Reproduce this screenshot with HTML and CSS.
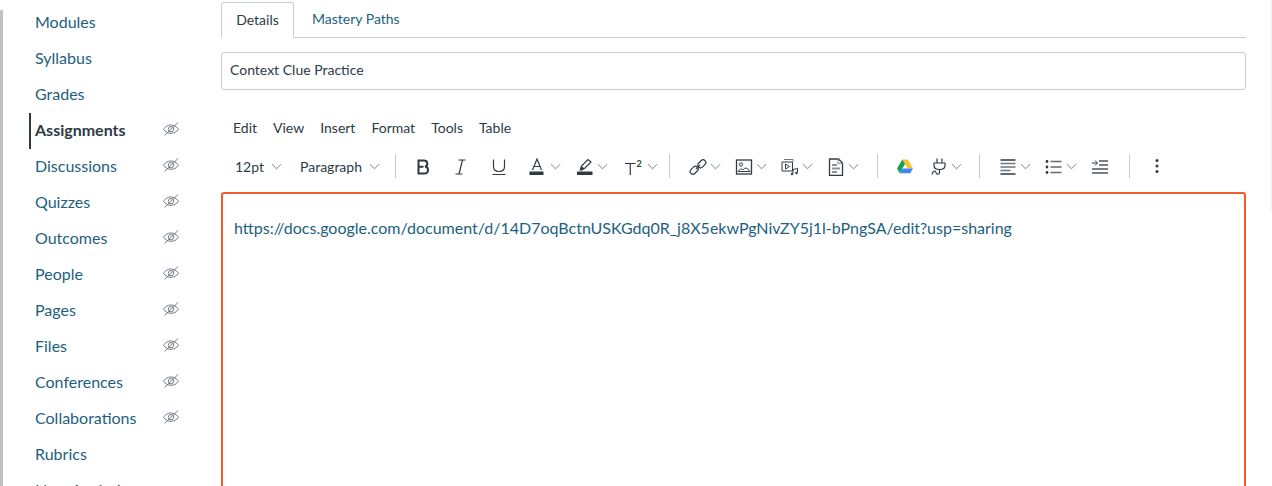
FILE: index.html
```html
<!DOCTYPE html>
<html lang="en">
<head>
<meta charset="utf-8">
<title>Context Clue Practice</title>
<link rel="stylesheet" href="styles.css">
</head>
<body>
<svg class="defs" width="0" height="0" aria-hidden="true">
  <defs>
    <symbol id="eye" viewBox="0 0 16 14">
      <path d="M.5 7.200C2.600 4.300 5 3 8 3s5.400 1.300 7.500 4.200C13.400 10 11 11.300 8 11.300S2.600 10 .5 7.200Z" fill="none" stroke="#66717a" stroke-width=".9"/>
      <circle cx="8" cy="7.200" r="2.700" fill="none" stroke="#66717a" stroke-width=".9"/>
      <path d="M1.500 13.500 15 .5" fill="none" stroke="#66717a" stroke-width=".9"/>
    </symbol>
    <symbol id="chev" viewBox="0 0 12 7">
      <path d="M1 1l5 5 5-5" fill="none" stroke="#68777d" stroke-width="1"/>
    </symbol>
  </defs>
</svg>
<div class="page">
  <div class="scrollbar"></div>
  <nav class="nav">
    <a class="nav-item">Modules</a>
    <a class="nav-item">Syllabus</a>
    <a class="nav-item">Grades</a>
    <a class="nav-item active">Assignments<svg class="eye"><use href="#eye"/></svg></a>
    <a class="nav-item">Discussions<svg class="eye"><use href="#eye"/></svg></a>
    <a class="nav-item">Quizzes<svg class="eye"><use href="#eye"/></svg></a>
    <a class="nav-item">Outcomes<svg class="eye"><use href="#eye"/></svg></a>
    <a class="nav-item">People<svg class="eye"><use href="#eye"/></svg></a>
    <a class="nav-item">Pages<svg class="eye"><use href="#eye"/></svg></a>
    <a class="nav-item">Files<svg class="eye"><use href="#eye"/></svg></a>
    <a class="nav-item">Conferences<svg class="eye"><use href="#eye"/></svg></a>
    <a class="nav-item">Collaborations<svg class="eye"><use href="#eye"/></svg></a>
    <a class="nav-item">Rubrics</a>
    <a class="nav-item">New Analytics</a>
  </nav>
  <main class="main">
    <div class="tabs">
      <div class="tab selected">Details</div>
      <div class="tab">Mastery Paths</div>
    </div>
    <div class="title-input">Context Clue Practice</div>
    <div class="menubar">
      <span>Edit</span><span>View</span><span>Insert</span><span>Format</span><span>Tools</span><span>Table</span>
    </div>
    <div class="toolbar">
      <div class="group">
        <span class="select size">12pt<svg class="chev"><use href="#chev"/></svg></span>
        <span class="select para">Paragraph<svg class="chev"><use href="#chev"/></svg></span>
      </div>
      <div class="group g-format">
        <svg class="ic" viewBox="0 0 18 18"><path d="M4.500 2.500h5.200c2.300 0 3.600 1.200 3.600 3.200 0 1.500-.9 2.600-2.300 2.900 1.800.2 3 1.500 3 3.300 0 2.300-1.600 3.600-4.100 3.600H4.500ZM4.500 8.700h5" fill="none" stroke="#2d3b45" stroke-width="2"/></svg>
        <svg class="ic g-i" viewBox="0 0 18 18"><path d="M6.500 2h7M3.500 16h7M10.500 2 7 16" fill="none" stroke="#2d3b45" stroke-width="1.200"/></svg>
        <svg class="ic g-u" viewBox="0 0 18 18"><path d="M3.500 1.500v7c0 3.300 2.200 5 5.500 5s5.500-1.700 5.500-5v-7M2.500 16.500h13" fill="none" stroke="#2d3b45" stroke-width="1.200"/></svg>
        <span class="drop g-a"><svg class="ic" viewBox="0 0 18 18"><path d="M4.500 12 9 1 13.500 12M6 8.500h6" fill="none" stroke="#2d3b45" stroke-width="1.200"/><rect x="1.500" y="13.500" width="14" height="3.500" fill="#2d3b45"/></svg><svg class="chev"><use href="#chev"/></svg></span>
        <span class="drop g-h"><svg class="ic" viewBox="0 0 18 18"><path d="M4.500 11.500l1-3.500L12 1.500l3 2.500-6.500 6.500Z" fill="none" stroke="#2d3b45" stroke-width="1.200"/><path d="M5.500 8l3 2.500-2 2h-3Z" fill="#2d3b45"/><rect x="1" y="13.500" width="15.500" height="3.500" fill="#2d3b45"/></svg><svg class="chev"><use href="#chev"/></svg></span>
        <span class="drop g-t"><svg class="ic" viewBox="0 0 18 18"><path d="M0 5.500h10.500M5.250 5.500V17" fill="none" stroke="#2d3b45" stroke-width="1.200"/><text x="11.500" y="8.500" class="sup">2</text></svg><svg class="chev"><use href="#chev"/></svg></span>
      </div>
      <div class="group g-insert">
        <span class="drop"><svg class="ic" viewBox="0 0 18 18"><g fill="none" stroke="#2d3b45" stroke-width="1.200"><rect x="0.700" y="9.500" width="9" height="5.400" rx="2.600" transform="rotate(-45 5.200 12.200)"/><rect x="8.300" y="3.100" width="9" height="5.400" rx="2.600" transform="rotate(-45 12.800 5.800)"/><path d="M7 11l4-4"/></g></svg><svg class="chev"><use href="#chev"/></svg></span>
        <span class="drop"><svg class="ic" viewBox="0 0 18 18"><rect x="1.500" y="2" width="15" height="14" fill="none" stroke="#2d3b45" stroke-width="1.300"/><circle cx="6" cy="6.500" r="1.600" fill="none" stroke="#2d3b45"/><path d="M3 13.500c2-3 3.500-3 5-1.500 1.500-2.500 4-3 7 1.500Z" fill="none" stroke="#2d3b45" stroke-width="1"/></svg><svg class="chev"><use href="#chev"/></svg></span>
        <span class="drop"><svg class="ic" viewBox="0 0 18 18"><path d="M3 1.500h9v2" fill="none" stroke="#6c7780" stroke-width="1"/><path d="M1 4h10.500v9H1ZM4.500 6v5l4-2.500Z" fill="none" stroke="#2d3b45" stroke-width="1"/><path d="M12 11.500v4M16.500 10.500v4M12 11.500l4.500-1" fill="none" stroke="#2d3b45" stroke-width="1"/><circle cx="11" cy="16" r="1.200" fill="#2d3b45"/><circle cx="15.500" cy="15" r="1.200" fill="#2d3b45"/></svg><svg class="chev"><use href="#chev"/></svg></span>
        <span class="drop"><svg class="ic" viewBox="0 0 18 18"><path d="M2.500 1h9l4 4v12.500h-13Z" fill="none" stroke="#2d3b45" stroke-width="1.300"/><path d="M11 1v4.500h4.500" fill="none" stroke="#8a949b" stroke-width="1.100"/><path d="M5 6h5v2H5ZM5 9.500h8v2H5ZM5 13h5v2H5Z" fill="#8a949b"/></svg><svg class="chev"><use href="#chev"/></svg></span>
      </div>
      <div class="group g-tools">
        <svg class="ic g-drive" viewBox="0 0 18 18"><path d="M6.300 1.500h5.400L17 10.500h-5.400Z" fill="#fbc02d"/><path d="M6.300 1.500 1 10.500l2.700 4.700L9 6Z" fill="#1a9f5b"/><path d="M3.700 15.200h10.600l2.700-4.700H6.400Z" fill="#4285f4"/></svg>
        <span class="drop g-plug"><svg class="ic" viewBox="0 0 18 18"><path d="M7 .5v4.500M12 .5v4.500M4 5h11v2.500c0 2.500-2 4-5.500 4S4 10 4 7.500ZM9.500 11.500v3c0 2-3 2.500-3.500 0S2.500 13 2 16.500" fill="none" stroke="#2d3b45" stroke-width="1.200"/></svg><svg class="chev"><use href="#chev"/></svg></span>
      </div>
      <div class="group g-layout">
        <span class="drop"><svg class="ic" viewBox="0 0 18 18"><path d="M1.500 5.500h15M1.500 9h15M1.500 12.500h10" fill="none" stroke="#6c7780" stroke-width="1.300"/><path d="M1.500 2h15M1.500 16h15" fill="none" stroke="#2d3b45" stroke-width="1.300"/></svg><svg class="chev"><use href="#chev"/></svg></span>
        <span class="drop"><svg class="ic" viewBox="0 0 18 18"><path d="M5.500 3.500h11M5.500 9h11M5.500 14.500h11" fill="none" stroke="#5f6b74" stroke-width="1.700"/><circle cx="2" cy="3.500" r="1.400" fill="#2d3b45"/><circle cx="2" cy="9" r="1.400" fill="#2d3b45"/><circle cx="2" cy="14.500" r="1.400" fill="#2d3b45"/></svg><svg class="chev"><use href="#chev"/></svg></span>
        <svg class="ic" viewBox="0 0 18 18"><path d="M8 3h9M8 7h9M1 11h16M1 15h16" fill="none" stroke="#4a565f" stroke-width="1.300"/><path d="M1 5h5M4 2.500 6.500 5 4 7.500" fill="none" stroke="#2d3b45"/></svg>
      </div>
      <div class="group g-more">
        <svg class="more" viewBox="0 0 4 16"><circle cx="2" cy="2.500" r="1.500"/><circle cx="2" cy="8" r="1.500"/><circle cx="2" cy="13.500" r="1.500"/></svg>
      </div>
    </div>
    <div class="editor">https://docs.google.com/document/d/14D7oqBctnUSKGdq0R_j8X5ekwPgNivZY5j1l-bPngSA/edit?usp=sharing</div>
  </main>
  <div class="edge"></div>
</div>
</body>
</html>
```
FILE: styles.css
```css
* { box-sizing: border-box; }
html, body { margin: 0; height: 486px; overflow: hidden; background: #fff; }
body { font-family: Lato, "Open Sans", sans-serif; color: #2d3b45; }
.defs { position: absolute; }
.page { display: flex; height: 486px; overflow: hidden; }
.scrollbar { width: 3px; margin-top: 10px; background: #c1c1c1; flex: none; }
.nav { width: 218px; flex: none; padding: 5px 0 0 26px; display: flex; flex-direction: column; }
.nav-item { height: 36px; flex: none; display: flex; align-items: center; justify-content: space-between; padding: 0 2px 4px 4px; font-size: 16px; color: #1d5f7e; border-left: 2px solid transparent; width: 152px; }
.nav-item.active { font-weight: 700; color: #2d3b45; border-left-color: #2d3b45; }
.eye { width: 16px; height: 14px; }
.main { width: 1025px; flex: none; display: flex; flex-direction: column; }
.main > * { flex: none; }
.tabs { display: flex; height: 38px; padding-top: 2px; border-bottom: 1px solid #c7cdd1; font-size: 14px; }
.tab { padding: 0 15px 0 18px; height: 36px; line-height: 34px; color: #1d5f7e; }
.tab.selected { width: 73px; padding: 0; text-align: center; height: 36px; color: #2d3b45; border: 1px solid #c7cdd1; border-bottom: 1px solid #fff; border-radius: 3px 3px 0 0; }
.title-input { height: 38px; margin-top: 14px; padding: 0 8px; line-height: 33px; font-size: 14px; border: 1px solid #c7cdd1; border-radius: 3px; }
.menubar { display: flex; gap: 16px; margin-top: 28px; height: 20px; padding-left: 12px; font-size: 14px; line-height: 20px; color: #2d3b45; }
.toolbar { display: flex; align-items: center; height: 34px; margin-top: 11px; font-size: 14px; color: #2d3b45; }
.group { display: flex; align-items: center; height: 24px; border-right: 1px solid #c7cdd1; flex: none; }
.group:first-child { width: 175px; padding-left: 14px; gap: 18px; }
.select { display: flex; align-items: center; gap: 7px; }
.chev { width: 11px; height: 7px; margin-top: 1px; }
.drop { display: flex; align-items: center; gap: 3px; }
.ic { width: 18px; height: 18px; flex: none; margin-top: 2px; }
.g-format { width: 274px; padding-left: 18px; }
.g-i, .g-u, .g-a { margin-left: 20px; }
.g-a { gap: 4px; }
.g-h { margin-left: 15px; }
.g-t { margin-left: 15px; gap: 4px; }
.g-t .ic { margin-left: 2px; }
.g-insert { width: 208px; padding-left: 19px; gap: 14px; }
.g-tools { width: 102px; padding-left: 18px; }
.g-plug { margin-left: 16px; }
.g-layout { width: 150px; padding-left: 19px; gap: 14px; }
.g-more { border-right: 0; padding-left: 25px; }
.more { width: 4px; height: 16px; fill: #2d3b45; }
.sup { font: 700 9px Lato, sans-serif; fill: #2d3b45; }
.editor { height: 320px; margin-top: 9px; border: 2px solid #f15d2c; border-radius: 3px; padding: 24px 11px; font-size: 16px; line-height: 20px; color: #1d5f7e; }
.edge { width: 2px; flex: none; margin-left: 24px; background: #f5f5f5; height: 210px; }
```
